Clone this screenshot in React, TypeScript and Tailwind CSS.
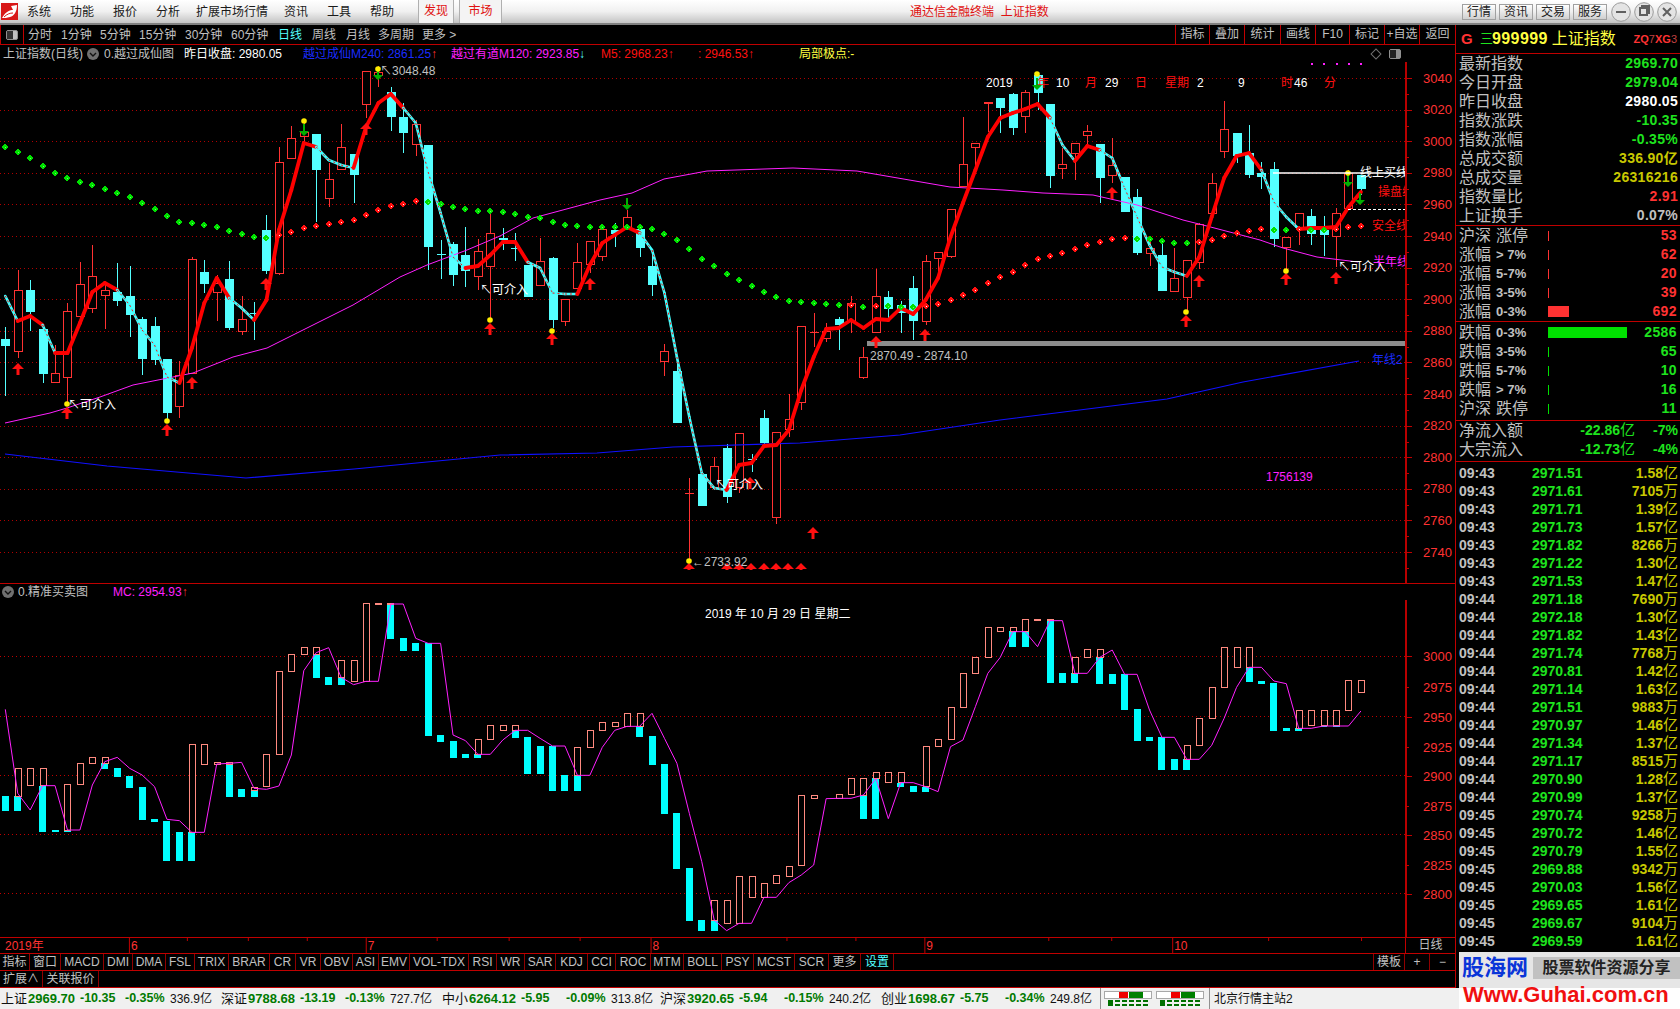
import React from 'react'

const FONT = "[font-family:'Liberation_Sans','Noto_Sans_CJK_SC',sans-serif]"

const X = (i: number) => 5.3 + 12.437 * i

// [up, bodyTop, bodyBottom, high, low]
const candles: number[][] = [
  [0,339,346,327,396],[1,290,351,270,358],[0,290,312,280,331],[0,329,374,329,383],[1,373,382,345,382],
  [1,311,377,303,404],[1,284,316,262,320],[1,276,308,245,313],[1,290,295,283,329],[0,292,301,263,306],
  [0,296,315,266,337],[0,319,359,317,375],[0,326,360,317,365],[0,359,413,359,420],[1,375,406,361,418],
  [1,259,373,257,373],[0,272,284,260,293],[1,283,292,275,321],[0,279,328,261,330],[1,319,331,296,335],
  [0,313,314,302,340],[0,230,271,215,274],[1,162,273,147,275],[1,138,158,126,158],[1,132,136,123,143],
  [0,134,170,134,222],[1,179,198,163,207],[1,147,169,124,169],[0,154,175,154,203],[1,71,104,71,118],
  [1,72,75,66,87],[0,92,117,87,131],[0,117,133,103,153],[1,124,144,120,156],[0,145,247,145,270],
  [0,254,255,240,279],[0,244,275,242,286],[0,255,271,227,287],[1,251,276,239,290],[1,233,266,213,320],
  [0,238,240,228,250],[0,248,249,233,261],[0,265,297,265,297],[1,261,285,238,285],[0,258,320,257,328],
  [1,299,321,299,326],[1,262,288,243,288],[1,241,264,241,273],[1,229,256,229,261],[0,230,234,223,247],
  [1,217,227,210,230],[0,229,248,224,257],[0,266,285,255,296],[1,351,361,344,376],[0,371,423,363,423],
  [1,493,494,478,560],[0,474,506,474,506],[1,466,487,457,490],[0,448,497,444,503],[1,433,487,433,493],
  [0,459,460,454,472],[0,418,443,410,447],[1,432,517,432,524],[1,419,429,394,437],[1,326,402,326,410],
  [1,332,333,313,347],[1,331,338,323,342],[0,319,325,317,350],[1,303,321,296,333],[1,357,377,347,379],
  [1,296,332,269,332],[0,297,309,291,318],[0,305,313,301,333],[0,288,321,276,340],[1,261,321,255,325],
  [1,252,258,252,273],[1,209,256,209,258],[1,164,186,117,186],[1,143,147,143,168],[1,102,104,102,132],
  [0,98,108,98,133],[0,94,128,93,135],[1,92,116,90,133],[0,75,93,73,110],[0,104,176,104,188],
  [1,164,168,148,179],[1,143,153,143,180],[1,131,135,125,147],[0,144,178,144,203],[1,165,175,138,183],
  [0,177,212,177,212],[0,197,253,189,255],[1,248,253,242,266],[0,255,291,243,291],[1,278,291,248,291],
  [1,260,297,260,312],[1,224,262,223,269],[1,183,213,173,213],[1,129,151,101,158],[0,133,156,133,163],
  [0,153,175,125,178],[0,173,177,162,189],[0,169,239,162,247],[1,237,247,237,270],[1,213,227,213,245],
  [0,216,234,209,245],[0,230,235,216,256],[1,213,236,208,267],[1,173,208,170,208],[0,175,189,175,195],
]

const trend = [
  296,321,316,325,353,353,323,292,283,290,305,330,345,377,383,348,303,278,298,308,320,300,230,190,143,147,160,165,168,127,
  103,94,108,123,172,213,257,268,266,255,242,242,262,268,293,294,294,265,243,235,227,233,250,293,357,417,473,488,490,465,
  463,446,445,430,390,357,329,328,320,328,319,320,308,314,300,278,237,203,170,137,118,113,109,104,118,145,161,146,150,158,
  188,217,245,267,272,276,257,217,178,156,153,170,202,217,229,228,228,227,207,192,
]
const cyanRanges = [[0,1],[3,4],[9,14],[18,20],[25,28],[32,37],[42,46],[51,58],[84,86],[88,95],[101,104]]
const isCyan = (i: number) => cyanRanges.some(([a, b]) => i >= a && i < b)

const dots = [
  147,152,158,166,173,178,182,185,189,193,197,203,209,216,222,223,225,227,231,234,237,238,
  235,232,228,226,224,222,220,215,210,206,204,201,202,204,207,209,211,211,
  212,214,217,218,222,225,226,227,227,227,227,227,229,234,240,249,259,266,274,280,286,292,297,301,302,303,304,305,
  305,307,306,306,307,307,306,304,300,295,290,283,277,272,265,259,256,253,249,245,242,239,238,
  239,239,241,243,243,242,240,236,233,231,229,230,230,229,230,230,229,227,226,
]
const redDot = (i: number) =>
  (i >= 22 && i <= 33) || i === 68 || i === 70 || (i >= 74 && i <= 90) || (i >= 96 && i <= 101) || i === 104 || i >= 107

const halfYear = [
  [5,423],[50,413],[67,408],[100,397],[133,385],[173,377],[193,373],[233,357],[267,348],[307,328],[353,305],[400,277],[427,265],[467,250],
  [500,236],[533,218],[600,200],[632,193],[664,179],[707,171],[793,168],[857,171],[950,187],[1003,190],[1043,193],[1093,195],[1137,205],
  [1183,220],[1203,225],[1260,240],[1283,248],[1317,257],[1358,262],
]
const yearLine = [
  [5,454],[107,466],[246,478],[354,469],[500,455],[597,453],[673,447],[800,443],[900,435],[1000,420],[1167,399],[1243,382],[1359,361],
]

const upArrows = [
  [18,363],[67,407],[167,424],[266,278],[192,377],[366,123],[490,323],[552,333],[590,278],[750,477],[813,527],[876,336],[925,329],
  [1112,187],[1199,275],[1186,315],[1286,273],[1336,272],
]
const tinyArrows = [689,727,739,751,764,776,788,801]
const yellowDots = [[67,404],[167,421],[490,320],[304,121],[378,69],[552,331],[689,561],[1037,74],[1186,312],[1286,271],[1348,173]]
const downArrows = [[304,124],[378,68],[627,198],[1037,78],[1348,175],[1360,193]]

// pink box top/bottom, cyan bar top/bottom, in lower panel pixels
const lowerBars: number[][] = [
  [0,0,648,692],[565,648,648,692],[565,617,0,0],[565,617,617,755],[0,0,750,755],[613,752,750,755],[550,613,0,0],[532,550,0,0],[532,550,550,567],[0,0,564,590],
  [0,0,588,624],[0,0,621,720],[0,0,717,725],[0,0,723,843],[0,0,756,843],[493,757,757,843],[493,554,0,0],[547,553,0,0],[547,553,553,650],[0,0,628,650],
  [620,628,628,650],[523,620,0,0],[274,523,0,0],[223,275,0,0],[202,223,0,0],[202,223,223,293],[0,0,292,314],[241,292,292,314],[241,304,0,0],[70,304,0,0],
  [70,74,0,0],[70,74,74,176],[0,0,175,212],[0,0,190,212],[0,0,190,467],[0,0,465,485],[0,0,483,533],[0,0,522,533],[478,523,523,533],[436,478,0,0],
  [436,451,0,0],[436,451,451,473],[0,0,471,581],[0,0,498,581],[0,0,498,632],[0,0,586,632],[502,586,586,632],[451,502,0,0],[427,451,0,0],[427,439,0,0],
  [400,439,0,0],[400,439,439,470],[0,0,468,554],[0,0,552,701],[0,0,699,866],[0,0,864,1022],[0,0,1020,1052],[961,1020,1020,1052],[961,1030,0,0],[889,1030,0,0],
  [889,952,0,0],[910,952,0,0],[886,910,0,0],[857,886,0,0],[646,857,0,0],[646,655,0,0],[0,0,0,0],[643,655,0,0],[595,643,0,0],[595,645,645,716],
  [577,595,595,716],[577,608,0,0],[577,608,608,620],[0,0,618,635],[499,620,620,635],[478,499,0,0],[382,478,0,0],[280,382,0,0],[232,280,0,0],[142,232,0,0],
  [142,154,0,0],[142,154,154,200],[118,154,154,200],[118,122,0,0],[118,122,122,308],[0,0,280,308],[232,280,280,308],[208,232,0,0],[208,232,232,311],[0,0,282,311],
  [0,0,283,389],[0,0,388,482],[0,0,471,482],[0,0,472,569],[0,0,537,569],[496,538,538,569],[415,496,0,0],[322,415,0,0],[202,322,0,0],[202,262,0,0],
  [202,262,262,305],[0,0,303,311],[0,0,309,452],[0,0,444,452],[391,445,445,452],[391,437,0,0],[391,437,437,440],[391,437,437,440],[301,391,0,0],[301,338,0,0],
]
const lowerLine = [
  388,640,690,617,617,750,750,615,545,532,565,585,620,718,722,757,757,552,550,547,625,628,618,525,272,218,203,292,314,304,
  304,72,72,175,190,190,465,482,523,523,480,451,451,475,498,498,586,586,502,451,439,439,400,475,550,700,845,1020,1052,1030,
  1030,952,952,908,885,855,656,655,655,645,595,716,608,608,620,635,500,480,380,280,232,155,155,200,122,122,280,280,232,210,
  283,283,390,472,472,538,538,496,415,322,262,262,303,311,445,445,438,438,438,393,
]
const LY = (v: number) => v / 3 + 580

const trades: [string, string, string, string][] = [
  ['09:43','2971.51','1.58','亿'],['09:43','2971.61','7105','万'],['09:43','2971.71','1.39','亿'],['09:43','2971.73','1.57','亿'],
  ['09:43','2971.82','8266','万'],['09:43','2971.22','1.30','亿'],['09:43','2971.53','1.47','亿'],['09:44','2971.18','7690','万'],
  ['09:44','2972.18','1.30','亿'],['09:44','2971.82','1.43','亿'],['09:44','2971.74','7768','万'],['09:44','2970.81','1.42','亿'],
  ['09:44','2971.14','1.63','亿'],['09:44','2971.51','9883','万'],['09:44','2970.97','1.46','亿'],['09:44','2971.34','1.37','亿'],
  ['09:44','2971.17','8515','万'],['09:44','2970.90','1.28','亿'],['09:44','2970.99','1.37','亿'],['09:45','2970.74','9258','万'],
  ['09:45','2970.72','1.46','亿'],['09:45','2970.79','1.55','亿'],['09:45','2969.88','9342','万'],['09:45','2970.03','1.56','亿'],
  ['09:45','2969.65','1.61','亿'],['09:45','2969.67','9104','万'],['09:45','2969.59','1.61','亿'],
]

const tabs: [string, number][] = [
  ['指标',30],['窗口',31],['MACD',43],['DMI',29],['DMA',33],['FSL',29],['TRIX',34],['BRAR',41],['CR',26],['VR',25],['OBV',32],['ASI',26],['EMV',31],
  ['VOL-TDX',59],['RSI',28],['WR',28],['SAR',31],['KDJ',32],['CCI',28],['ROC',35],['MTM',33],['BOLL',38],['PSY',32],['MCST',41],['SCR',34],['更多',32],['设置',33],
]

const periods: [string, number, string][] = [
  ['分时',33,''],['1分钟',39,''],['5分钟',39,''],['15分钟',46,''],['30分钟',46,''],['60分钟',47,''],['日线',34,'text-[#54ffff]'],['周线',34,''],['月线',32,''],['多周期',44,''],['更多 >',40,''],
]

function T({ x, y, c = '#c0c0c0', s = 12, a, children }: { x: number; y: number; c?: string; s?: number; a?: 'end' | 'middle'; children: React.ReactNode }) {
  return <text x={x} y={y} fill={c} fontSize={s} textAnchor={a} dominantBaseline="central">{children}</text>
}

function Hollow({ x, top, bottom, width = 8, color = '#ff3232' }: { x: number; top: number; bottom: number; width?: number; color?: string }) {
  const l = Math.round(x - width / 2) + 0.5
  return <rect x={l} y={Math.round(top) + 0.5} width={width} height={Math.max(Math.round(bottom - top), 1)} fill="#000" stroke={color} />
}

function UpArrow({ x, y, h = 12 }: { x: number; y: number; h?: number }) {
  return <path d={`M${x} ${y}L${x + 6} ${y + 6}H${x + 1.5}V${y + h}H${x - 1.5}V${y + 6}H${x - 6}Z`} fill="#ff1010" />
}

function DownArrow({ x, y }: { x: number; y: number }) {
  return <path d={`M${x - 1} ${y}H${x + 1}V${y + 7}H${x + 5}L${x} ${y + 12}L${x - 5} ${y + 7}H${x - 1}Z`} fill="#00b000" />
}

function UpperChart() {
  const prices = Array.from({ length: 16 }, (_, i) => 3040 - i * 20)
  return (
    <svg viewBox="0 62 1456 521" width={1456} height={521} className="block">
      <defs>
        <clipPath id="plot"><rect x={0} y={62} width={1405} height={521} /></clipPath>
      </defs>
      {prices.map((_, i) => 78 + i * 31.6).map((y) => (
        <line key={y} x1={0} x2={1405} y1={Math.round(y) + 0.5} y2={Math.round(y) + 0.5} stroke="#b00000" strokeDasharray="1 3" shapeRendering="crispEdges" />
      ))}
      <rect x={1405} y={62} width={2} height={521} fill="#b80000" />
      {prices.map((p, i) => (
        <g key={p} shapeRendering="crispEdges">
          <line x1={1405} x2={1412} y1={Math.round(78 + i * 31.6) + 0.5} y2={Math.round(78 + i * 31.6) + 0.5} stroke="#c00000" />
          <line x1={1405} x2={1409} y1={Math.round(94 + i * 31.6) + 0.5} y2={Math.round(94 + i * 31.6) + 0.5} stroke="#c00000" />
          <T x={1423} y={78 + i * 31.6} c="#ff3232" s={13}>{p}</T>
        </g>
      ))}
      <g shapeRendering="crispEdges">
        {candles.map(([up, top, bottom, high, low], i) => {
          const x = Math.round(X(i)) + 0.5
          const color = up ? '#ff3232' : '#54ffff'
          return (
            <g key={i}>
              <line x1={x} x2={x} y1={high} y2={low} stroke={color} />
              {bottom - top < 3 ? (
                <rect x={x - 4.5} y={top} width={9} height={Math.max(bottom - top, 1)} fill={color} />
              ) : up ? (
                <Hollow x={X(i)} top={top} bottom={bottom} />
              ) : (
                <rect x={x - 4.5} y={top} width={9} height={bottom - top} fill={color} />
              )}
            </g>
          )
        })}
      </g>
      <polyline points={yearLine.map((p) => p.join(',')).join(' ')} fill="none" stroke="#1010ff" strokeWidth={1.2} />
      <polyline points={halfYear.map((p) => p.join(',')).join(' ')} fill="none" stroke="#ff20ff" strokeWidth={1} />
      <rect x={867} y={341} width={538} height={5} fill="#8c8c8c" />
      {trend.slice(0, -1).map((y, i) => {
        const x1 = X(i), x2 = X(i + 1), y2 = trend[i + 1]
        return isCyan(i) ? (
          <g key={i}>
            <line x1={x1} y1={y} x2={x2} y2={y2} stroke="#40ffff" strokeWidth={2.6} strokeLinecap="round" />
            <line x1={x1} y1={y} x2={x2} y2={y2} stroke="#ff1010" strokeWidth={1} strokeDasharray="2 3" />
          </g>
        ) : (
          <line key={i} x1={x1} y1={y} x2={x2} y2={y2} stroke="#ff0000" strokeWidth={3.8} strokeLinecap="round" />
        )
      })}
      {dots.map((y, i) => {
        const x = X(i)
        const red = redDot(i)
        return (
          <g key={i} shapeRendering="crispEdges">
            <path d={`M${x} ${y - 3.5}L${x + 3.5} ${y}L${x} ${y + 3.5}L${x - 3.5} ${y}Z`} fill={red ? '#ff1010' : '#00e000'} />
            <rect x={x} y={y} width={1} height={1} fill={red ? '#ffffff' : '#60ff60'} />
          </g>
        )
      })}
      {upArrows.map(([x, y]) => <UpArrow key={`${x}-${y}`} x={x} y={y} />)}
      {tinyArrows.map((x) => <UpArrow key={x} x={x} y={563} h={7} />)}
      {downArrows.map(([x, y]) => <DownArrow key={x} x={x} y={y} />)}
      {yellowDots.map(([x, y]) => <circle key={x} cx={x} cy={y} r={2.8} fill="#ffee00" />)}
      {[1311, 1323, 1336, 1348, 1360].map((x) => <rect key={x} x={x} y={63} width={2} height={2} fill="#ff20ff" />)}

      <line x1={1273} x2={1405} y1={173} y2={173} stroke="#fff" strokeWidth={1.6} />
      <line x1={1348} x2={1405} y1={209.5} y2={209.5} stroke="#fff" strokeDasharray="3 2" />

      <T x={986} y={83} c="#fff">2019</T>
      <T x={1037} y={83} c="#ff1010">年</T>
      <T x={1056} y={83} c="#fff">10</T>
      <T x={1085} y={83} c="#ff1010">月</T>
      <T x={1105} y={83} c="#fff">29</T>
      <T x={1135} y={83} c="#ff1010">日</T>
      <T x={1165} y={83} c="#ff1010">星期</T>
      <T x={1197} y={83} c="#fff">2</T>
      <T x={1238} y={83} c="#fff">9</T>
      <T x={1281} y={83} c="#ff1010">时</T>
      <T x={1294} y={83} c="#fff">46</T>
      <T x={1324} y={83} c="#ff1010">分</T>

      <T x={380} y={71}>↖3048.48</T>
      <T x={692} y={562}>←2733.92</T>
      <T x={870} y={356}>2870.49 - 2874.10</T>
      <T x={68} y={405} c="#fff">↖可介入</T>
      <T x={480} y={290} c="#fff">↖可介入</T>
      <T x={715} y={485} c="#fff">↖可介入</T>
      <T x={1338} y={267} c="#fff">↖可介入</T>
      <g clipPath="url(#plot)">
        <T x={1360} y={173} c="#fff">线上买线</T>
        <T x={1378} y={192} c="#ff1010">操盘线</T>
        <T x={1372} y={226} c="#ff1010">安全线</T>
        <T x={1373} y={262} c="#ff20ff">半年线</T>
        <T x={1372} y={360} c="#1a2cff">年线2</T>
      </g>
      <T x={1266} y={477} c="#ff20ff">1756139</T>
    </svg>
  )
}

function LowerChart() {
  const labels = [3000, 2975, 2950, 2925, 2900, 2875, 2850, 2825, 2800]
  const ys = [656, 687, 717, 747, 776, 806, 835, 865, 894]
  return (
    <svg viewBox="0 600 1456 337" width={1456} height={337} className="block">
      {[656, 716, 775, 834, 893].map((y) => (
        <line key={y} x1={0} x2={1405} y1={y + 0.5} y2={y + 0.5} stroke="#c00000" strokeDasharray="1 3" shapeRendering="crispEdges" />
      ))}
      <rect x={1405} y={600} width={2} height={337} fill="#b80000" />
      {labels.map((p, i) => (
        <g key={p}>
          <line x1={1405} x2={i % 2 ? 1409 : 1412} y1={ys[i] + 0.5} y2={ys[i] + 0.5} stroke="#c00000" shapeRendering="crispEdges" />
          <T x={1423} y={ys[i]} c="#ff3232" s={13}>{p}</T>
        </g>
      ))}
      <g shapeRendering="crispEdges">
        {lowerBars.map(([p0, p1, c0, c1], i) => {
          const x = X(i)
          return (
            <g key={i}>
              {c1 > 0 && <rect x={Math.round(x - 3.5)} y={LY(c0)} width={7} height={(c1 - c0) / 3} fill="#00ffff" />}
              {p1 > 0 && (p1 - p0 < 6
                ? <rect x={Math.round(x - 3.5)} y={LY(p0)} width={7} height={2} fill="#ff8a80" />
                : <Hollow x={x} top={LY(p0)} bottom={LY(p1)} width={6} color="#ff8a80" />)}
            </g>
          )
        })}
      </g>
      <polyline points={lowerLine.map((v, i) => `${X(i)},${LY(v)}`).join(' ')} fill="none" stroke="#ff20ff" strokeWidth={1} />
      <T x={705} y={614} c="#fff">2019 年 10 月 29 日 星期二</T>
    </svg>
  )
}

function TimeAxis() {
  const minor = [187, 248, 307, 437, 509, 580, 787, 856, 1049, 1112, 1269, 1362]
  const months: [string, number][] = [['6', 129], ['7', 366], ['8', 651], ['9', 925], ['10', 1173]]
  return (
    <svg viewBox="0 0 1406 15" width={1406} height={15} className="block">
      {minor.map((x) => <line key={x} x1={x + 0.5} x2={x + 0.5} y1={0} y2={3} stroke="#c00000" />)}
      <T x={5} y={8} c="#ff3232">2019年</T>
      {months.map(([m, x]) => (
        <g key={m}>
          <line x1={x + 0.5} x2={x + 0.5} y1={0} y2={15} stroke="#c00000" />
          <T x={x + 2} y={8} c="#ff3232">{m}</T>
        </g>
      ))}
    </svg>
  )
}

function Logo() {
  return (
    <svg viewBox="0 0 17 17" className="w-[17px] h-[17px] shrink-0 ml-[1px]">
      <rect width={17} height={17} fill="#d81818" />
      <path d="M1 15C5 8 9 7 12 7L10 3L16 2C16 9 13 13 9 14C6 15 3 15 1 15Z" fill="#fff" />
      <path d="M3 14C6 11 9 10 12 10" stroke="#d81818" fill="none" />
    </svg>
  )
}

function TitleBar() {
  const menu: [string, number][] = [['系统',43],['功能',43],['报价',43],['分析',40],['扩展市场行情',88],['资讯',43],['工具',43],['帮助',48]]
  const right = ['行情', '资讯', '交易', '服务']
  return (
    <div className="flex items-center h-[25px] shrink-0 bg-gradient-to-b from-white via-[#f0f0f0] to-[#c4c4c4] border-b-2 border-[#808080] text-[12px]">
      <Logo />
      <div className="flex ml-[9px] text-[#1a1a1a]">
        {menu.map(([m, w]) => <span key={m} style={{ width: w }}>{m}</span>)}
      </div>
      <span className="w-[36px] h-full border-x border-[#b0b0b0] text-[#e01010] bg-[#f4f4f4] text-center leading-[23px]">发现</span>
      <span className="w-[43px] h-full ml-[5px] border-x border-[#b0b0b0] text-[#e01010] bg-[#f4f4f4] text-center leading-[23px]">市场</span>
      <span className="ml-[408px] text-[#e01010]">通达信金融终端&nbsp; 上证指数</span>
      <div className="ml-auto flex items-center gap-[2px] mr-[3px]">
        {right.map((r) => (
          <span key={r} className="w-[34px] h-[16px] mr-[1px] border border-[#a0a0a0] bg-gradient-to-b from-white to-[#d0d0d0] text-[#222] text-center leading-[14px]">{r}</span>
        ))}
        {['M5 10H15', 'M6 6H13V13H6ZM8 6V4H15V11H13', 'M6 6L14 14M14 6L6 14'].map((d) => (
          <svg key={d} viewBox="0 0 20 20" className="w-[20px] h-[20px] ml-[1px]">
            <circle cx={10} cy={10} r={9.3} fill="#e4e4e4" stroke="#9a9a9a" />
            <path d={d} fill="none" stroke="#606060" strokeWidth={2} />
          </svg>
        ))}
      </div>
    </div>
  )
}

function PeriodBar() {
  const tools: [string, number][] = [['指标',34],['叠加',35],['统计',36],['画线',35],['F10',34],['标记',35],['+自选',35],['返回',36]]
  return (
    <div className="flex items-center h-[20px] shrink-0 border-b border-[#c00000] text-[12px] text-[#c0c0c0]">
      <div className="flex items-center justify-center w-[24px] h-full border-x border-[#c00000]">
        <span className="flex w-[12px] h-[10px] rounded-[2px] border border-[#909090] bg-[#c0c0c0]"><span className="w-[6px] bg-[#333]" /></span>
      </div>
      <div className="flex pl-[4px]">
        {periods.map(([p, w, c]) => <span key={p} style={{ width: w }} className={c}>{p}</span>)}
      </div>
      <div className="ml-auto flex h-full">
        {tools.map(([t, w]) => (
          <span key={t} style={{ width: w }} className="border-l border-[#c00000] text-center leading-[19px]">{t}</span>
        ))}
      </div>
    </div>
  )
}

function InfoRow() {
  return (
    <div className="relative flex items-center h-[17px] shrink-0 text-[12px] whitespace-nowrap text-[#c0c0c0]">
      <span className="ml-[3px] w-[84px]">上证指数(日线)</span>
      <svg viewBox="0 0 12 12" className="w-[12px] h-[12px] mr-[5px]">
        <circle cx={6} cy={6} r={6} fill="#707070" />
        <path d="M3 5L6 8L9 5" fill="none" stroke="#111" strokeWidth={1.4} />
      </svg>
      <span className="w-[80px]">0.越过成仙图</span>
      <span className="w-[119px] text-white">昨日收盘: 2980.05</span>
      <span className="w-[148px] text-[#1a2cff]">越过成仙M240: 2861.25<span className="text-[#ff3232]">↑</span></span>
      <span className="w-[150px] text-[#ff20ff]">越过有道M120: 2923.85<span className="text-[#54ffff]">↓</span></span>
      <span className="w-[97px] text-[#ff1010]">M5: 2968.23↑</span>
      <span className="w-[101px] text-[#ff1010]">: 2946.53↑</span>
      <span className="text-[#ffff40]">局部极点:-</span>
      <div className="ml-auto flex items-center gap-[9px] mr-[54px]">
        <span className="w-[8px] h-[8px] rotate-45 border border-[#707070]" />
        <span className="flex w-[12px] h-[10px] rounded-[2px] border border-[#909090] bg-[#909090]"><span className="w-[6px] bg-[#222]" /></span>
      </div>
    </div>
  )
}

function Tabs() {
  return (
    <div className="flex h-[17px] shrink-0 border-b border-[#c00000] text-[12px] text-[#c0c0c0]">
      {tabs.map(([t, w]) => (
        <span key={t} style={{ width: w }} className={`text-center leading-[16px] border-r border-[#900000] ${t === '设置' ? 'text-[#54ffff]' : ''}`}>{t}</span>
      ))}
      <span className="flex-1 border-r border-[#900000]" />
      <span className="w-[31px] text-center leading-[16px] border-r border-[#900000]">模板</span>
      <span className="w-[25px] text-center leading-[16px] border-r border-[#900000]">+</span>
      <span className="w-[25px] text-center leading-[16px]">−</span>
    </div>
  )
}

function MainColumn() {
  return (
    <div className="flex flex-col w-[1456px] shrink-0 border-r border-[#c00000]">
      <PeriodBar />
      <InfoRow />
      <UpperChart />
      <div className="flex items-center h-[17px] shrink-0 border-t border-[#c00000] text-[12px] text-[#c0c0c0] whitespace-nowrap">
        <svg viewBox="0 0 12 12" className="w-[12px] h-[12px] ml-[2px] mr-[4px]">
          <circle cx={6} cy={6} r={6} fill="#707070" />
          <path d="M3 5L6 8L9 5" fill="none" stroke="#111" strokeWidth={1.4} />
        </svg>
        <span className="w-[95px]">0.精准买卖图</span>
        <span className="text-[#ff20ff]">MC: 2954.93<span className="text-[#ff3232]">↑</span></span>
      </div>
      <LowerChart />
      <div className="flex h-[16px] shrink-0 border-t border-b-0 border-[#c00000]">
        <TimeAxis />
        <span className="w-[50px] border-l border-[#c00000] text-[12px] text-[#c0c0c0] text-center leading-[15px]">日线</span>
      </div>
      <div className="border-t border-[#c00000]"><Tabs /></div>
      <div className="flex h-[17px] shrink-0 text-[12px] text-[#c0c0c0] border-b border-[#c00000]">
        <span className="w-[43px] text-center leading-[16px] border-r border-[#900000]">扩展∧</span>
        <span className="w-[56px] text-center leading-[16px] border-r border-[#900000]">关联报价</span>
      </div>
    </div>
  )
}

function QuoteRow({ label, value, c }: { label: string; value: string; c: string }) {
  return (
    <div className="flex justify-between items-center h-[19px] pl-[3px] pr-[2px]">
      <span className="text-[16px] text-[#c0c0c0]">{label}</span>
      <span className={`text-[14px] font-bold tracking-[0.3px] ${c}`}>{value}</span>
    </div>
  )
}

function CountRow({ a, b, bold, n, barW, red }: { a: string; b: string; bold?: boolean; n: string; barW: number; red: boolean }) {
  return (
    <div className="flex items-center h-[19px] pl-[3px] pr-[3px]">
      <span className="w-[89px] flex items-center whitespace-nowrap text-[#c0c0c0]">
        <span className="text-[16px] mr-[5px]">{a}</span>
        <span className={bold ? 'text-[13px] font-bold' : 'text-[16px]'}>{b}</span>
      </span>
      <span style={{ width: barW }} className={`${barW > 1 ? 'h-[11px]' : 'h-[10px]'} ${red ? 'bg-[#ff3232]' : 'bg-[#00e000]'}`} />
      <span className={`ml-auto text-[14px] font-bold tracking-[0.4px] ${red ? 'text-[#ff3232]' : 'text-[#1ee31e]'}`}>{n}</span>
    </div>
  )
}

function FlowRow({ label, v, p }: { label: string; v: string; p: string }) {
  return (
    <div className="flex items-center h-[19px] pl-[3px] pr-[2px] text-[#1ee31e]">
      <span className="w-[118px] text-[16px] text-[#c0c0c0]">{label}</span>
      <span className="w-[58px] text-[14px] font-bold text-right whitespace-nowrap">{v}<span className="font-normal text-[15px]">亿</span></span>
      <span className="ml-auto text-[14px] font-bold">{p}</span>
    </div>
  )
}

function SidePanel() {
  return (
    <div className="flex flex-col flex-1 overflow-hidden">
      <div className="flex items-center h-[29px] shrink-0 border-b border-[#c00000] pl-[5px] pr-[3px] whitespace-nowrap">
        <span className="w-[19px] text-[15px] font-bold text-[#ff3232]">G</span>
        <span className="w-[12px] text-[13px] text-[#1ee31e]">三</span>
        <span className="text-[16px] font-bold text-[#ffff40] tracking-[0.4px]">999999</span>
        <span className="ml-[4px] text-[16px] text-[#ffff40]">上证指数</span>
        <span className="ml-auto text-[11px] font-bold text-[#ff3232]">ZQ<span className="font-normal text-[#c04040]">7</span>XG<span className="font-normal text-[#c04040]">3</span></span>
      </div>
      <div className="border-b border-[#c00000]">
        <QuoteRow label="最新指数" value="2969.70" c="text-[#1ee31e]" />
        <QuoteRow label="今日开盘" value="2979.04" c="text-[#1ee31e]" />
        <QuoteRow label="昨日收盘" value="2980.05" c="text-white" />
        <QuoteRow label="指数涨跌" value="-10.35" c="text-[#1ee31e]" />
        <QuoteRow label="指数涨幅" value="-0.35%" c="text-[#1ee31e]" />
        <QuoteRow label="总成交额" value="336.90亿" c="text-[#c8c800]" />
        <QuoteRow label="总成交量" value="26316216" c="text-[#c8c800]" />
        <QuoteRow label="指数量比" value="2.91" c="text-[#ff3232]" />
        <QuoteRow label="上证换手" value="0.07%" c="text-[#c0c0c0]" />
      </div>
      <div className="border-b border-[#c00000]">
        <CountRow a="沪深" b="涨停" n="53" barW={1} red />
        <CountRow a="涨幅" b="> 7%" bold n="62" barW={1} red />
        <CountRow a="涨幅" b="5-7%" bold n="20" barW={1} red />
        <CountRow a="涨幅" b="3-5%" bold n="39" barW={1} red />
        <CountRow a="涨幅" b="0-3%" bold n="692" barW={21} red />
      </div>
      <div className="border-b border-[#c00000] pb-[2px] pt-[1px]">
        <CountRow a="跌幅" b="0-3%" bold n="2586" barW={79} red={false} />
        <CountRow a="跌幅" b="3-5%" bold n="65" barW={1} red={false} />
        <CountRow a="跌幅" b="5-7%" bold n="10" barW={1} red={false} />
        <CountRow a="跌幅" b="> 7%" bold n="16" barW={1} red={false} />
        <CountRow a="沪深" b="跌停" n="11" barW={1} red={false} />
      </div>
      <div className="border-b border-[#c00000] pb-[2px]">
        <FlowRow label="净流入额" v="-22.86" p="-7%" />
        <FlowRow label="大宗流入" v="-12.73" p="-4%" />
      </div>
      <div>
        {trades.map(([t, p, v, u], i) => (
          <div key={i} className="grid grid-cols-[73px_60px_1fr] items-center h-[18px] pl-[3px] pr-[2px] text-[14px] font-bold">
            <span className="text-[#c0c0c0]">{t}</span>
            <span className="text-[#1ee31e]">{p}</span>
            <span className="text-right text-[#c8c800] whitespace-nowrap">{v}<span className="font-normal text-[15px]">{u}</span></span>
          </div>
        ))}
      </div>
    </div>
  )
}

function Watermark() {
  return (
    <div className="absolute right-0 bottom-0 w-[221px] h-[57px] bg-white/90 flex flex-col overflow-hidden">
      <div className="flex items-center h-[29px] pl-[3px] pt-[2px]">
        <span className="text-[22px] leading-none font-bold text-[#0a35d8]">股海网</span>
        <span className="ml-[5px] h-[22px] w-[147px] bg-[#b8b8b8]/80 text-[16px] leading-[22px] font-bold text-[#222] text-center whitespace-nowrap">股票软件资源分享</span>
      </div>
      <span className="pl-[4px] text-[22px] leading-[27px] font-bold text-[#f01010] whitespace-nowrap">Www.Guhai.com.cn</span>
    </div>
  )
}

function Flags() {
  return (
    <svg viewBox="0 0 101 16" width={101} height={16} className="ml-[3px] shrink-0">
      {[0, 52].map((x) => (
        <g key={x} shapeRendering="crispEdges">
          <rect x={x + 0.5} y={0.5} width={47} height={7} fill="#fff" stroke="#a8a8a8" />
          <rect x={x + 15} y={1} width={9} height={6} fill="#f00000" />
          <rect x={x + 25} y={1} width={14} height={6} fill="#008000" />
          {[4, 11, 18, 25, 32, 39].map((b) => (
            <rect key={b} x={x + b} y={9} width={5} height={b === 4 ? 6 : 2} fill="#007000" />
          ))}
          {[11, 18, 25, 32, 39].map((b) => (
            <rect key={b} x={x + b} y={13} width={5} height={2} fill="#007000" />
          ))}
        </g>
      ))}
    </svg>
  )
}

function StatusBar() {
  const groups: [string, string, string, string, string, number][] = [
    ['上证', '2969.70', '-10.35', '-0.35%', '336.9亿', 220],
    ['深证', '9788.68', '-13.19', '-0.13%', '727.7亿', 221],
    ['中小', '6264.12', '-5.95', '-0.09%', '313.8亿', 218],
    ['沪深', '3920.65', '-5.94', '-0.15%', '240.2亿', 221],
    ['创业', '1698.67', '-5.75', '-0.34%', '249.8亿', 220],
  ]
  return (
    <div className="flex items-center h-[21px] shrink-0 bg-[#f0f0f0] text-[13px] whitespace-nowrap text-[#111]">
      {groups.map(([n, p, d, r, a, w]) => (
        <div key={n} style={{ width: w }} className="flex items-center shrink-0">
          <span className="w-[28px] pl-[1px] text-[13px]">{n}</span>
          <span className="w-[52px] font-bold text-[#007a00]">{p}</span>
          <span className="w-[45px] font-bold text-[#007a00] text-[12.5px]">{d}</span>
          <span className="w-[45px] font-bold text-[#007a00] text-[12.5px]">{r}</span>
          <span className="text-[12px]">{a}</span>
        </div>
      ))}
      <span className="h-full border-l border-[#909090]" />
      <Flags />
      <span className="h-full ml-[4px] border-l border-[#909090]" />
      <span className="ml-[4px] text-[12px]">北京行情主站2</span>
    </div>
  )
}

export default function App() {
  return (
    <div className={`relative flex flex-col w-[1680px] h-[1009px] overflow-hidden bg-black ${FONT}`}>
      <TitleBar />
      <div className="flex flex-1 min-h-0">
        <MainColumn />
        <SidePanel />
      </div>
      <StatusBar />
      <Watermark />
    </div>
  )
}
